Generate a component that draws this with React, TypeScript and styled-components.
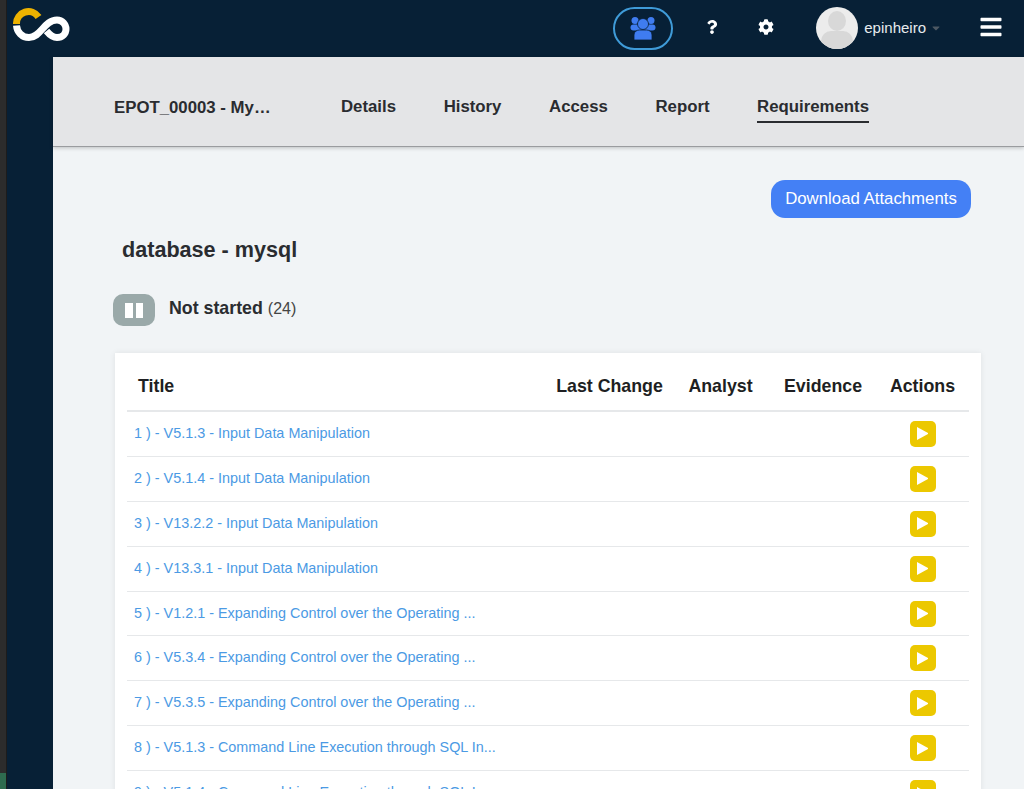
import React from "react";
import styled, { createGlobalStyle } from "styled-components";
import { FaQuestion, FaCog, FaBars, FaCaretDown } from "react-icons/fa";

const Global = createGlobalStyle`
  html, body { margin: 0; padding: 0; height: 100%; overflow: hidden; }
  * { box-sizing: border-box; }
  body { font-family: "Liberation Sans", Arial, sans-serif; color: #222; }
`;
const Page = styled.div`display: flex; width: 1024px; height: 789px; overflow: hidden; background: #072036;`;
const EdgeStrip = styled.div`width: 7px; background: linear-gradient(#2c2c2c 0 773px, #2e6b4f 773px); border-right: 1px solid #1c1c1c; flex: none;`;
const Shell = styled.div`flex: 1; display: flex; flex-direction: column; min-width: 0;`;
const TopBar = styled.header`height: 57px; flex: none; display: flex; align-items: center; background: #072036; color: #fff; padding-left: 6px;`;
const Logo = styled.svg`width: 57px; height: 34px; flex: none; margin-top: -7px;`;
const TopActions = styled.div`margin-left: auto; display: flex; align-items: center; height: 100%;`;
const TeamButton = styled.button`width: 60px; height: 43px; border-radius: 22px; border: 2px solid #3f9bd8; background: transparent; display: flex; align-items: center; justify-content: center; padding: 0; margin-right: 29px; margin-top: -1px;`;
const TeamIcon = styled.svg`width: 26px; height: 24px; fill: #3f7cf0;`;
const IconSlot = styled.span`display: flex; justify-content: center; align-items: center; font-size: ${p => p.$size}px; width: 20px; margin-right: ${p => p.$gap}px; margin-top: -4px;`;
const Avatar = styled.div`width: 42px; height: 42px; border-radius: 50%; background: #ececec; position: relative; overflow: hidden; margin-right: 6px; flex: none; margin-top: -1px;`;
const AvatarHead = styled.div`position: absolute; left: 12px; top: 4px; width: 18px; height: 20px; border-radius: 50%; background: #d8d8d8;`;
const AvatarBody = styled.div`position: absolute; left: 5px; top: 24px; width: 32px; height: 24px; border-radius: 10px; background: #d8d8d8;`;
const UserName = styled.span`font-size: 15px; color: #e8ebee; margin-right: 4px; margin-top: -3px;`;
const Caret = styled.span`display: flex; color: #4d5863; font-size: 12px; margin-right: 37px; margin-top: -1px;`;
const Menu = styled.span`display: flex; font-size: 24px; margin-right: 21px; margin-top: -3px;`;
const Body = styled.div`flex: 1; display: flex; min-height: 0;`;
const SideRail = styled.aside`width: 46px; flex: none; background: #072036;`;
const Main = styled.main`flex: 1; min-width: 0; background: #f1f4f6; display: flex; flex-direction: column;`;
const SubHeader = styled.div`height: 90px; flex: none; background: #e4e5e7; border-bottom: 1px solid #9a9c9f; box-shadow: 0 1px 4px rgba(0,0,0,.22); display: flex; align-items: center; padding-left: 61px;`;
const ProjectName = styled.div`font-size: 16.8px; font-weight: 700; color: #2a2c30; width: 227px; white-space: nowrap; margin-top: 12px;`;
const Tabs = styled.nav`display: flex; gap: 47.6px; height: 100%; align-items: stretch; padding-top: 29px;`;
const Tab = styled.a`font-size: 16.8px; font-weight: 700; color: #2a2c30; height: 37px; line-height: 41px; border-bottom: ${p => p.$active ? "2px solid #2a2c30" : "none"};`;
const Content = styled.div`flex: 1; padding: 33px 43px 0 62px; min-height: 0;`;
const DownloadRow = styled.div`display: flex; justify-content: flex-end; margin-right: 10px;`;
const DownloadButton = styled.button`height: 38px; width: 200px; border: none; border-radius: 14px; background: #4480f5; color: #fff; font: 400 16.8px "Liberation Sans", sans-serif;`;
const Heading = styled.h2`font-size: 21.6px; font-weight: 700; color: #2a2c30; margin: 18px 0 0 7px; line-height: 28px;`;
const StatusRow = styled.div`display: flex; align-items: center; margin: 30px 0 0 -2px; height: 32px;`;
const StatusBadge = styled.div`width: 42px; height: 32px; border-radius: 10px; background: #9aa9a9; display: flex; align-items: center; justify-content: center; gap: 3px; margin-right: 14px;`;
const PauseBar = styled.span`width: 7.5px; height: 15px; background: #fff;`;
const StatusLabel = styled.span`font-size: 17.8px; font-weight: 700; color: #2a2c30; margin-top: -3px;`;
const StatusCount = styled.span`font-size: 16px; font-weight: 400; color: #444; margin-left: 5px;`;
const Card = styled.section`margin-top: 27px; background: #fff; box-shadow: 0 0 6px rgba(0,0,0,.08); padding: 0 12px; height: 600px;`;
const Row = styled.div`display: grid; grid-template-columns: 1fr 123px 99px 106px 93px; align-items: center;`;
const HeadRow = styled(Row)`height: 59px; padding-top: 10px; border-bottom: 2px solid #e6e8ea; font-size: 17.8px; font-weight: 700; color: #1e1f22;`;
const HeadCell = styled.div`text-align: ${p => p.$left ? "left" : "center"}; padding-left: ${p => p.$left ? "11px" : "0"};`;
const DataRow = styled(Row)`height: 44.9px; border-bottom: 1px solid #e6e8ea;`;
const TitleLink = styled.a`font-size: 14.4px; color: #4b9ae4; padding-left: 7px; margin-top: -2px; white-space: nowrap;`;
const PlayButton = styled.button`grid-column: 5; justify-self: center; width: 26px; height: 26px; border: none; border-radius: 5px; padding: 0; background: #ecc800; display: flex; align-items: center; justify-content: center;`;
const PlayGlyph = styled.svg`width: 11px; height: 13px; flex: none; fill: #fff;`;

const rows = [
  "1 ) - V5.1.3 - Input Data Manipulation",
  "2 ) - V5.1.4 - Input Data Manipulation",
  "3 ) - V13.2.2 - Input Data Manipulation",
  "4 ) - V13.3.1 - Input Data Manipulation",
  "5 ) - V1.2.1 - Expanding Control over the Operating ...",
  "6 ) - V5.3.4 - Expanding Control over the Operating ...",
  "7 ) - V5.3.5 - Expanding Control over the Operating ...",
  "8 ) - V5.1.3 - Command Line Execution through SQL In...",
  "9 ) - V5.1.4 - Command Line Execution through SQL I...",
];
const tabs = ["Details", "History", "Access", "Report", "Requirements"];

export default function App() {
  return (
    <Page>
      <Global />
      <EdgeStrip />
      <Shell>
        <TopBar>
          <Logo viewBox="13 8 57 34">
            <path d="M16.5 24 A12 12 0 0 1 38.5 17" fill="none" stroke="#edb200" strokeWidth="7" />
            <path d="M16.5 25.5 C17 32 22 37.5 29 37.5 C41 37.5 44 20 57 20 C62.5 20 66 24.5 66 29 C66 33.5 62.5 37.5 57 37.5 C52 37.5 49 34 46.5 31" fill="none" stroke="#fff" strokeWidth="7" />
          </Logo>
          <TopActions>
            <TeamButton aria-label="Teams">
              <TeamIcon viewBox="0 0 26 24">
                <circle cx="5" cy="4.5" r="3.5" />
                <circle cx="21" cy="4.5" r="3.5" />
                <rect x="0.5" y="8.5" width="25" height="6" rx="3" />
                <circle cx="13" cy="8" r="5.5" stroke="#072036" strokeWidth="0.8" />
                <path d="M4 24 V19 C4 15.5 7 14 9.5 14 H16.5 C19 14 22 15.5 22 19 V24 Z" stroke="#072036" strokeWidth="0.8" />
              </TeamIcon>
            </TeamButton>
            <IconSlot $size={14} $gap={34}><FaQuestion /></IconSlot>
            <IconSlot $size={16} $gap={40}><FaCog /></IconSlot>
            <Avatar><AvatarHead /><AvatarBody /></Avatar>
            <UserName>epinheiro</UserName>
            <Caret><FaCaretDown /></Caret>
            <Menu><FaBars /></Menu>
          </TopActions>
        </TopBar>
        <Body>
          <SideRail />
          <Main>
            <SubHeader>
              <ProjectName>EPOT_00003 - My…</ProjectName>
              <Tabs>{tabs.map(t => <Tab key={t} $active={t === "Requirements"}>{t}</Tab>)}</Tabs>
            </SubHeader>
            <Content>
              <DownloadRow><DownloadButton>Download Attachments</DownloadButton></DownloadRow>
              <Heading>database - mysql</Heading>
              <StatusRow>
                <StatusBadge><PauseBar /><PauseBar /></StatusBadge>
                <StatusLabel>Not started<StatusCount>(24)</StatusCount></StatusLabel>
              </StatusRow>
              <Card>
                <HeadRow>
                  <HeadCell $left>Title</HeadCell>
                  <HeadCell>Last Change</HeadCell>
                  <HeadCell>Analyst</HeadCell>
                  <HeadCell>Evidence</HeadCell>
                  <HeadCell>Actions</HeadCell>
                </HeadRow>
                {rows.map(r => (
                  <DataRow key={r}>
                    <TitleLink>{r}</TitleLink>
                    <PlayButton aria-label="Start">
                      <PlayGlyph viewBox="0 0 11 13"><path d="M0 0 L11 6 V7 L0 13 Z" /></PlayGlyph>
                    </PlayButton>
                  </DataRow>
                ))}
              </Card>
            </Content>
          </Main>
        </Body>
      </Shell>
    </Page>
  );
}
